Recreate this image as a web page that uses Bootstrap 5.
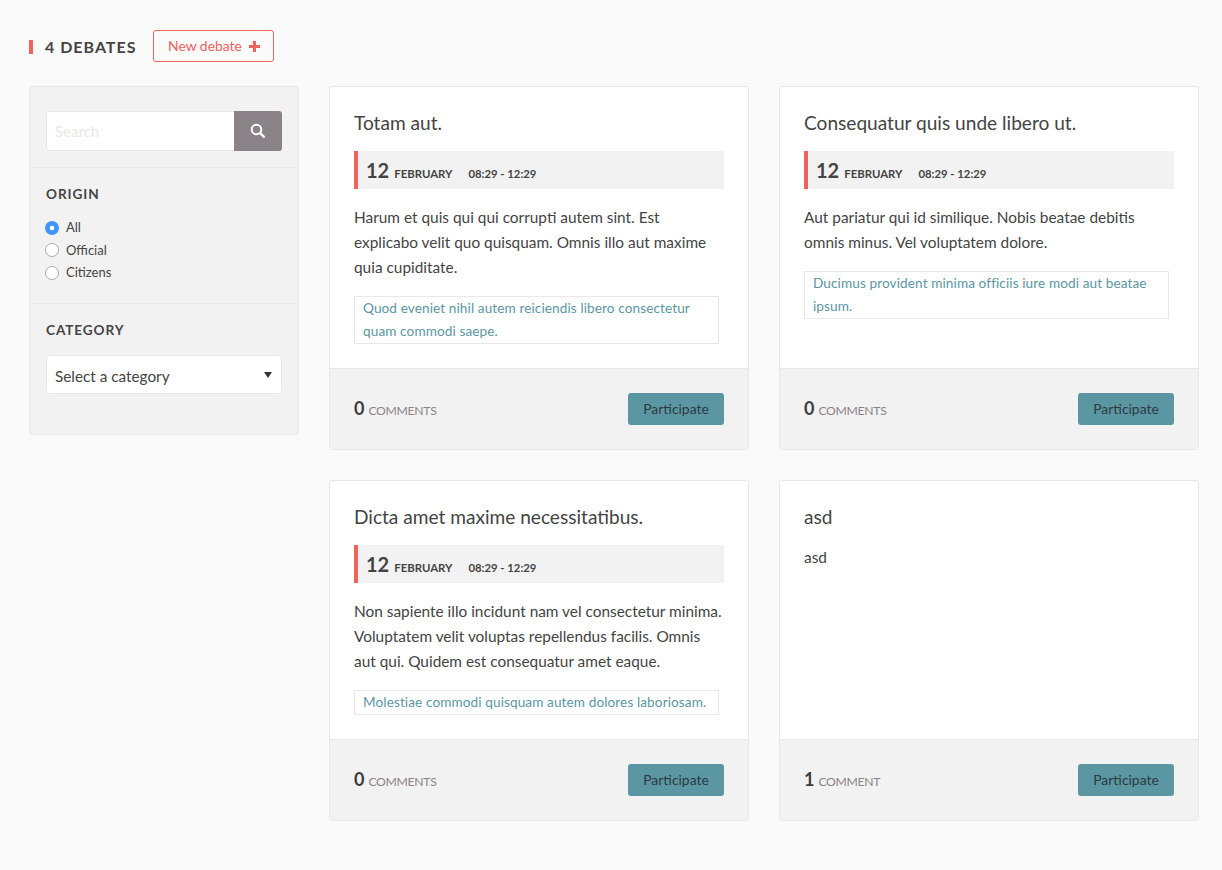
<!DOCTYPE html>
<html lang="en">
<head>
<meta charset="utf-8">
<title>Debates</title>
<link href="https://cdn.jsdelivr.net/npm/bootstrap@5.3.0/dist/css/bootstrap.min.css" rel="stylesheet">
<style>
body{background:#fafafa;color:#444;font-family:"Lato","Noto Sans",sans-serif;font-size:15px}
.page-wrap{padding:30px 23px 49px 29px}
.head-row{height:32px;margin-bottom:24px}
.head-title{border-left:4px solid #f0625a;padding-left:12px;font-size:16px;font-weight:700;letter-spacing:1px;line-height:14px;margin:2px 0 0;color:#444}
.new-btn{margin-left:17px;height:32px;width:121px;border:1px solid #f0625a;border-radius:3px;color:#f0625a;font-size:13.9px;padding:0;background:transparent}
.new-btn:hover{color:#f0625a;border-color:#f0625a}
.new-btn svg{margin-left:7px}
.layout{display:grid;grid-template-columns:270px 1fr;gap:30px}
.side-panel{background:#f2f2f2;border:1px solid #e8e8e8;border-radius:3px;align-self:start;height:349px}
.side-sec{padding:24px 16px 16px;border-bottom:1px solid #e8e8e8}
.side-sec.first{height:81px}
.side-sec.mid{height:136px;padding-top:16px}
.side-sec.last{border:0;padding-top:16px}
.search-in{height:40px;border:1px solid #e8e8e8;border-radius:3px 0 0 3px;font-size:15px;padding:0 8px 1px;box-shadow:none}
.search-in::placeholder{color:#e8e8e8}
.search-btn{width:48px;height:40px;background:#8a8388;border:0;border-radius:0 3px 3px 0;padding:0 2px 2px 0}
.side-label{font-size:13.6px;font-weight:700;letter-spacing:.9px;line-height:20px;margin:0 0 12.5px;color:#444}
.side-sec.last .side-label{margin-bottom:15px}
.radio-row{display:flex;align-items:center;height:22.5px;font-size:13px;margin:0}
.radio-row input{appearance:none;width:14px;height:14px;border:1px solid #aaa;border-radius:50%;background:#fff;margin:0 7px 0 -1px;flex:none}
.radio-row input:checked{border:0;background:radial-gradient(circle,#fff 0 2px,#3f94f5 2.6px)}
.cat-select{height:39px;border:1px solid #e8e8e8;border-radius:3px;font-size:15.3px;color:#444;padding:3px 8px 0;box-shadow:none;background-position:right 9px top 16px;background-size:8px 6px;background-image:url("data:image/svg+xml,%3Csvg xmlns='http://www.w3.org/2000/svg' viewBox='0 0 8 6'%3E%3Cpath d='M0 0h8L4 6z' fill='%23333'/%3E%3C/svg%3E")}
.deb-grid{display:grid;grid-template-columns:420px 420px;gap:30px}
.deb-card{border:1px solid #e8e8e8;border-radius:3px;background:#fff;display:flex;flex-direction:column}
.deb-body{padding:24px 24px 24px;flex:1}
.deb-title{font-size:19.100px;font-weight:400;line-height:24px;margin:0 0 16px;color:#444}
.date-bar{height:38px;background:#f2f2f2;border-left:4px solid #f0625a;padding-left:8px;display:flex;align-items:baseline;line-height:38px;margin-bottom:16px}
.date-day{font-size:20px;font-weight:700;margin-right:5px}
.date-mon{font-size:11.4px;font-weight:700;margin-right:16px}
.date-time{font-size:11.3px;font-weight:700}
.deb-text{font-size:15.4px;line-height:25px;margin:0 0 16px}
.deb-text.only{margin-bottom:0}
.deb-quote{display:block;width:365px;border:1px solid #e8e8e8;padding:0 8px;font-size:13.6px;letter-spacing:.1px;line-height:23px;color:#5b97a3;text-decoration:none}
.deb-foot{height:81px;background:#f2f2f2;border-top:1px solid #e8e8e8;border-radius:0 0 3px 3px;padding:0 24px;display:flex;align-items:center;justify-content:space-between}
.cnt-wrap{margin-bottom:2px}
.cnt{font-size:18px;font-weight:700;color:#3d3d3d;margin-right:4px}
.cnt-label{font-size:12.2px;letter-spacing:-.3px;color:#8a8388;text-transform:uppercase}
.part-btn{width:96px;height:32px;background:#5b97a3;border:0;border-radius:3px;padding:0;color:#2c3a40;font-size:13.9px}
.part-btn:hover{background:#5b97a3;color:#2c3a40}
</style>
</head>
<body>
<div class="page-wrap">
  <div class="d-flex align-items-center head-row">
    <h1 class="head-title text-uppercase">4 debates</h1>
    <a href="#" class="btn new-btn d-flex align-items-center justify-content-center text-decoration-none">New debate
      <svg width="11" height="11" viewBox="0 0 11 11" aria-hidden="true"><path d="M4 0h3v4h4v3H7v4H4V7H0V4h4z" fill="#f0625a"/></svg>
    </a>
  </div>
  <div class="layout">
    <aside class="side-panel">
      <div class="side-sec first">
        <div class="input-group flex-nowrap">
          <input type="text" class="form-control search-in" placeholder="Search" aria-label="Search">
          <button class="btn search-btn d-flex align-items-center justify-content-center" type="button" aria-label="Search">
            <svg width="15" height="15" viewBox="0 0 15 15" fill="none" stroke="#fff" aria-hidden="true"><circle cx="6.500" cy="6.500" r="4.800" stroke-width="2"/><path d="M10.200 10.200l3.500 3.500" stroke-width="2.400" stroke-linecap="round"/></svg>
          </button>
        </div>
      </div>
      <div class="side-sec mid">
        <h2 class="side-label text-uppercase">Origin</h2>
        <label class="radio-row"><input type="radio" name="origin" checked>All</label>
        <label class="radio-row"><input type="radio" name="origin">Official</label>
        <label class="radio-row"><input type="radio" name="origin">Citizens</label>
      </div>
      <div class="side-sec last">
        <h2 class="side-label text-uppercase">Category</h2>
        <select class="form-select cat-select" aria-label="Category"><option>Select a category</option></select>
      </div>
    </aside>
    <main class="deb-grid">
      <article class="deb-card">
        <div class="deb-body">
          <h3 class="deb-title">Totam aut.</h3>
          <div class="date-bar"><span class="date-day">12</span><span class="date-mon">FEBRUARY</span><span class="date-time">08:29 - 12:29</span></div>
          <p class="deb-text">Harum et quis qui qui corrupti autem sint. Est explicabo velit quo quisquam. Omnis illo aut maxime quia cupiditate.</p>
          <a href="#" class="deb-quote">Quod eveniet nihil autem reiciendis libero consectetur quam commodi saepe.</a>
        </div>
        <div class="deb-foot"><div class="cnt-wrap"><span class="cnt">0</span><span class="cnt-label">comments</span></div><a href="#" class="btn part-btn d-flex align-items-center justify-content-center">Participate</a></div>
      </article>
      <article class="deb-card">
        <div class="deb-body">
          <h3 class="deb-title">Consequatur quis unde libero ut.</h3>
          <div class="date-bar"><span class="date-day">12</span><span class="date-mon">FEBRUARY</span><span class="date-time">08:29 - 12:29</span></div>
          <p class="deb-text">Aut pariatur qui id similique. Nobis beatae debitis omnis minus. Vel voluptatem dolore.</p>
          <a href="#" class="deb-quote">Ducimus provident minima officiis iure modi aut beatae ipsum.</a>
        </div>
        <div class="deb-foot"><div class="cnt-wrap"><span class="cnt">0</span><span class="cnt-label">comments</span></div><a href="#" class="btn part-btn d-flex align-items-center justify-content-center">Participate</a></div>
      </article>
      <article class="deb-card">
        <div class="deb-body">
          <h3 class="deb-title">Dicta amet maxime necessitatibus.</h3>
          <div class="date-bar"><span class="date-day">12</span><span class="date-mon">FEBRUARY</span><span class="date-time">08:29 - 12:29</span></div>
          <p class="deb-text">Non sapiente illo incidunt nam vel consectetur minima. Voluptatem velit voluptas repellendus facilis. Omnis aut qui. Quidem est consequatur amet eaque.</p>
          <a href="#" class="deb-quote">Molestiae commodi quisquam autem dolores laboriosam.</a>
        </div>
        <div class="deb-foot"><div class="cnt-wrap"><span class="cnt">0</span><span class="cnt-label">comments</span></div><a href="#" class="btn part-btn d-flex align-items-center justify-content-center">Participate</a></div>
      </article>
      <article class="deb-card">
        <div class="deb-body">
          <h3 class="deb-title">asd</h3>
          <p class="deb-text only">asd</p>
        </div>
        <div class="deb-foot"><div class="cnt-wrap"><span class="cnt">1</span><span class="cnt-label">comment</span></div><a href="#" class="btn part-btn d-flex align-items-center justify-content-center">Participate</a></div>
      </article>
    </main>
  </div>
</div>
<script src="https://cdn.jsdelivr.net/npm/bootstrap@5.3.0/dist/js/bootstrap.bundle.min.js"></script>
</body>
</html>
